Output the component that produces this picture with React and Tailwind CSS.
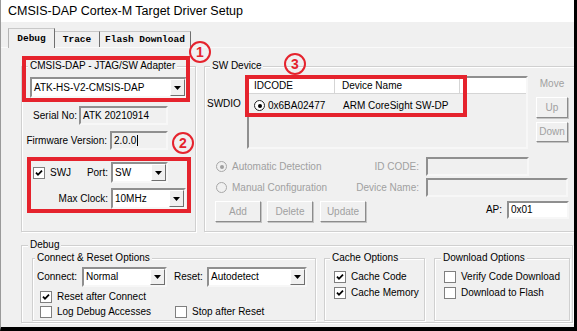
const GRAY = "text-[#a0a0a0]";

function Group({ className, legend, legendPos, children }) {
  return (
    <div className={`relative shrink-0 border border-[#d0d0d0] shadow-[inset_1px_1px_0_#ffffff,1px_1px_0_#ffffff] ${className}`}>
      <span className={`absolute top-[-7px] ${legendPos} px-[2px] bg-[#f0f0f0] leading-[12px] whitespace-nowrap`}>
        {legend}
      </span>
      {children}
    </div>
  );
}

function Arrow() {
  return (
    <span className="w-[15px] shrink-0 flex items-center justify-center bg-[#f0f0f0] border border-t-white border-l-white border-r-[#6f6f6f] border-b-[#6f6f6f]">
      <svg width="7" height="4" viewBox="0 0 7 4">
        <path d="M0 0H7L3.5 4Z" fill="#000" />
      </svg>
    </span>
  );
}

function Combo({ className, text }) {
  return (
    <div className={`flex shrink-0 border-2 border-t-[#8f8f8f] border-l-[#8f8f8f] border-r-[#f7f7f7] border-b-[#f7f7f7] bg-white ${className}`}>
      <span className="flex-1 flex items-center pl-[2px] leading-none whitespace-nowrap">{text}</span>
      <Arrow />
    </div>
  );
}

function TextBox({ className, children }) {
  return (
    <div className={`flex items-center shrink-0 pl-[2px] border-2 border-t-[#8f8f8f] border-l-[#8f8f8f] border-r-[#f7f7f7] border-b-[#f7f7f7] leading-none whitespace-nowrap ${className}`}>
      {children}
    </div>
  );
}

function Check({ on }) {
  return (
    <span className="w-[12px] h-[12px] shrink-0 bg-white border border-[#7f7f7f] flex items-center justify-center">
      {on && (
        <svg width="8" height="8" viewBox="0 0 8 8">
          <path d="M1 3.6L3 5.8L7 1.6" stroke="#000" strokeWidth="1.8" fill="none" />
        </svg>
      )}
    </span>
  );
}

function Radio({ on, disabled }) {
  return (
    <span
      className={`w-[11px] h-[11px] shrink-0 rounded-full border flex items-center justify-center ${
        disabled ? "border-[#a8a8a8] bg-[#f0f0f0]" : "border-[#222] border-[1.5px] bg-white"
      }`}
    >
      {on && <span className={`w-[4px] h-[4px] rounded-full ${disabled ? "bg-[#a0a0a0]" : "bg-black"}`} />}
    </span>
  );
}

function Btn({ className, children }) {
  return (
    <div className={`flex items-center justify-center shrink-0 ${GRAY} border border-t-white border-l-white border-r-[#8c8c8c] border-b-[#8c8c8c] shadow-[1px_1px_0_#c4c4c4] ${className}`}>
      {children}
    </div>
  );
}

function Opt({ on, label, className }) {
  return (
    <div className={`flex items-center h-[12px] ${className}`}>
      <Check on={on} />
      <span className="ml-[5px] whitespace-nowrap">{label}</span>
    </div>
  );
}

function Circled({ n, className }) {
  return (
    <span className={`absolute w-[22px] h-[22px] rounded-full border-[2.5px] border-[#e5232d] flex items-center justify-center text-[#e5232d] font-bold text-[14px] leading-none ${className}`}>
      {n}
    </span>
  );
}

export default function App() {
  return (
    <div className="relative w-[577px] h-[331px] overflow-hidden bg-[#f0f0f0] border-l border-l-[#9a9a9a] border-r-[3px] border-r-black border-b-[4px] border-b-black font-['Liberation_Sans',Arial,sans-serif] text-[10px] leading-[12px] text-black">
      {/* title */}
      <div className="h-[22px] bg-white flex items-center pl-[7px] text-[12.5px]">
        CMSIS-DAP Cortex-M Target Driver Setup
      </div>

      {/* tabs */}
      <div className="flex items-end h-[25px] pl-[7px] font-['Liberation_Mono',monospace] font-bold text-[9.5px]">
        <div className="relative z-10 mb-[-1px] w-[47px] h-[20px] flex items-center justify-center bg-[#f0f0f0] border-l border-t border-l-[#b4b4b4] border-t-[#c8c8c8] border-r border-r-[#6f6f6f]">
          Debug
        </div>
        <div className="w-[45px] h-[16px] flex items-center justify-center border-t border-t-[#c8c8c8] border-r border-r-[#6f6f6f]">
          Trace
        </div>
        <div className="w-[91px] h-[16px] flex items-center justify-center border-t border-t-[#c8c8c8] border-r border-r-[#6f6f6f]">
          Flash Download
        </div>
      </div>

      {/* tab page */}
      <div className="border-t border-t-[#fafafa]">
        <div className="flex mt-[18px] ml-[20px]">
          {/* adapter */}
          <Group className="w-[175px] h-[166px]" legend="CMSIS-DAP - JTAG/SW Adapter" legendPos="left-[6px]">
            <Combo className="ml-[8px] mt-[10px] w-[157px] h-[21px]" text="ATK-HS-V2-CMSIS-DAP" />
            <div className="flex items-center mt-[8px] h-[19px]">
              <span className="w-[57px] text-right pr-[2px] whitespace-nowrap">Serial No:</span>
              <TextBox className="w-[89px] h-[19px] bg-[#f0f0f0]">ATK 20210914</TextBox>
            </div>
            <div className="flex items-center mt-[6px] h-[19px]">
              <span className="w-[88px] text-right pr-[3px] whitespace-nowrap">Firmware Version:</span>
              <TextBox className="w-[58px] h-[19px] bg-[#f0f0f0]">
                2.0.0<span className="ml-[1px] w-px h-[11px] bg-black" />
              </TextBox>
            </div>
            <div className="flex items-center mt-[12px] h-[21px]">
              <div className="w-[64px] flex items-center pl-[11px]">
                <Check on />
                <span className="ml-[5px]">SWJ</span>
              </div>
              <span className="w-[24px] text-right pr-[2px]">Port:</span>
              <Combo className="ml-[1px] w-[57px] h-[21px]" text="SW" />
            </div>
            <div className="flex items-center mt-[5px] h-[21px]">
              <span className="w-[88px] text-right pr-[2px] whitespace-nowrap">Max Clock:</span>
              <Combo className="ml-[1px] w-[75px] h-[21px]" text="10MHz" />
            </div>
          </Group>

          {/* sw device */}
          <Group className="ml-[8px] w-[380px] h-[166px]" legend="SW Device" legendPos="left-[5px]">
            <div className="flex items-start mt-[9px]">
              <span className="w-[42px] pl-[2px] mt-[22px]">SWDIO</span>
              <div className="w-[281px] h-[73px] shrink-0 border-2 border-t-[#8f8f8f] border-l-[#8f8f8f] border-r-[#f7f7f7] border-b-[#f7f7f7] bg-[#f0f0f0]">
                <div className="flex h-[16px] bg-white border-b border-b-[#d5d5d5]">
                  <span className="w-[86px] flex items-center pl-[5px] border-r border-r-[#d5d5d5]">IDCODE</span>
                  <span className="w-[125px] flex items-center pl-[7px] border-r border-r-[#d5d5d5]">Device Name</span>
                  <span className="flex-1" />
                </div>
                <div className="flex items-center mt-[3px] h-[17px]">
                  <div className="w-[86px] flex items-center pl-[5px]">
                    <Radio on />
                    <span className="ml-[3px]">0x6BA02477</span>
                  </div>
                  <span className="pl-[8px] whitespace-nowrap">ARM CoreSight SW-DP</span>
                </div>
              </div>
              <div className="ml-[8px] w-[32px] flex flex-col">
                <span className={`mt-[2px] text-center ${GRAY}`}>Move</span>
                <Btn className="mt-[7px] h-[21px]">Up</Btn>
                <Btn className="mt-[4px] h-[20px]">Down</Btn>
              </div>
            </div>

            <div className="flex flex-col gap-[2px] mt-[8px]">
              <div className="flex items-center h-[19px]">
                <div className="w-[150px] flex items-center pl-[11px]">
                  <Radio on disabled />
                  <span className={`ml-[5px] ${GRAY}`}>Automatic Detection</span>
                </div>
                <span className={`w-[68px] text-right pr-[4px] ${GRAY}`}>ID CODE:</span>
                <TextBox className="ml-[3px] w-[103px] h-[19px] bg-[#f0f0f0]" />
              </div>
              <div className="flex items-center h-[19px]">
                <div className="w-[150px] flex items-center pl-[11px]">
                  <Radio disabled />
                  <span className={`ml-[5px] ${GRAY} whitespace-nowrap`}>Manual Configuration</span>
                </div>
                <span className={`w-[68px] text-right pr-[4px] ${GRAY} whitespace-nowrap`}>Device Name:</span>
                <TextBox className="ml-[3px] w-[142px] h-[19px] bg-[#f0f0f0]" />
              </div>
            </div>

            <div className="flex items-start mt-[4px]">
              <Btn className="ml-[10px] w-[46px] h-[21px]">Add</Btn>
              <Btn className="ml-[6px] w-[46px] h-[21px]">Delete</Btn>
              <Btn className="ml-[7px] w-[46px] h-[21px]">Update</Btn>
              <span className="w-[139px] h-[18px] flex items-center justify-end pr-[3px]">AP:</span>
              <TextBox className="ml-[2px] w-[62px] h-[18px] bg-white">0x01</TextBox>
            </div>
          </Group>
        </div>

        {/* debug */}
        <Group className="mt-[13px] ml-[20px] w-[552px] h-[78px]" legend="Debug" legendPos="left-[6px]">
          <div className="flex mt-[12px]">
            <Group className="ml-[10px] w-[284px] h-[63px]" legend="Connect & Reset Options" legendPos="left-[2px]">
              <div className="flex items-center mt-[8px] h-[20px]">
                <span className="w-[49px] pl-[4px]">Connect:</span>
                <Combo className="w-[85px] h-[20px]" text="Normal" />
                <span className="w-[40px] pl-[7px]">Reset:</span>
                <Combo className="w-[100px] h-[20px]" text="Autodetect" />
              </div>
              <Opt on label="Reset after Connect" className="mt-[4px] pl-[7px]" />
              <div className="flex mt-[3px]">
                <Opt label="Log Debug Accesses" className="w-[142px] pl-[7px]" />
                <Opt label="Stop after Reset" />
              </div>
            </Group>
            <Group className="ml-[8px] w-[101px] h-[63px]" legend="Cache Options" legendPos="left-[5px]">
              <div className="flex flex-col gap-[4px] mt-[12px] pl-[9px]">
                <Opt on label="Cache Code" />
                <Opt on label="Cache Memory" />
              </div>
            </Group>
            <Group className="ml-[9px] w-[136px] h-[63px]" legend="Download Options" legendPos="left-[6px]">
              <div className="flex flex-col gap-[4px] mt-[12px] pl-[9px]">
                <Opt label="Verify Code Download" />
                <Opt label="Download to Flash" />
              </div>
            </Group>
          </div>
        </Group>
      </div>

      {/* annotations */}
      <div className="absolute left-[21px] top-[56px] w-[168px] h-[46px] border-[4px] border-[#e5232d]" />
      <div className="absolute left-[26px] top-[157px] w-[164px] h-[56px] border-[4px] border-[#e5232d]" />
      <div className="absolute left-[244px] top-[75px] w-[222px] h-[42px] border-[4px] border-[#e5232d]" />
      <Circled n="1" className="left-[188px] top-[41px]" />
      <Circled n="2" className="left-[171px] top-[132px]" />
      <Circled n="3" className="left-[283px] top-[53px]" />
    </div>
  );
}
